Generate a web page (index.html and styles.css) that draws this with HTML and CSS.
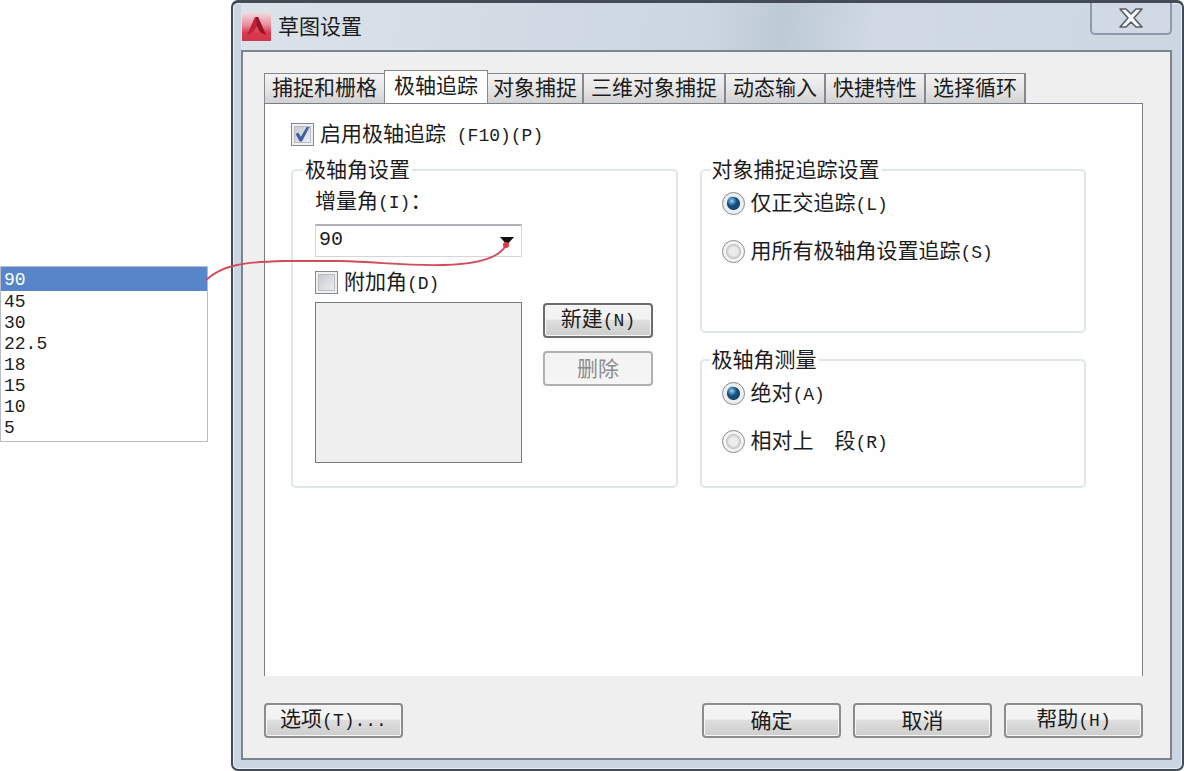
FILE: index.html
```html
<!DOCTYPE html>
<html lang="zh-CN">
<head>
<meta charset="utf-8">
<meta name="viewport" content="width=device-width, initial-scale=1">
<title>草图设置</title>
<link rel="stylesheet" href="styles.css">
</head>
<body class="page">
<aside class="angles">
  <select class="angle-list" size="8" aria-label="增量角列表">
    <option selected>90</option>
    <option>45</option>
    <option>30</option>
    <option>22.5</option>
    <option>18</option>
    <option>15</option>
    <option>10</option>
    <option>5</option>
  </select>
</aside>
<main class="dialog">
  <header class="titlebar">
    <svg class="logo" viewBox="0 0 29 28" aria-hidden="true">
      <defs><linearGradient id="logo-bg" x1="0" y1="0" x2="0" y2="1"><stop offset="0" stop-color="#f3d9de"/><stop offset=".45" stop-color="#e58a97"/><stop offset=".7" stop-color="#d93a50"/><stop offset="1" stop-color="#d0364a"/></linearGradient></defs>
      <rect width="29" height="28" fill="url(#logo-bg)"/>
      <path d="M5 22 13 4h3l8 18-6-3h-7z" fill="#c01f35"/>
      <path d="M11 19l4-6 3 6z" fill="#d8485b"/>
      <path d="M14 4h2l8 18-6-3-3-6z" fill="#971325"/>
    </svg>
    <h1 class="title">草图设置</h1>
    <button class="close" type="button" aria-label="关闭">
      <svg class="close-icon" viewBox="0 0 26 22" aria-hidden="true"><path d="M2 2h6l5 5 5-5h6l-8 9 8 9h-6l-5-5-5 5H2l8-9z" fill="#fafafa" stroke="#565c66" stroke-width="1.6" stroke-linejoin="round"/></svg>
    </button>
  </header>
  <form class="body">
    <div class="tabs" role="tablist">
      <button class="tab" type="button" role="tab">捕捉和栅格</button>
      <button class="tab tab-active" type="button" role="tab" aria-selected="true">极轴追踪</button>
      <button class="tab" type="button" role="tab">对象捕捉</button>
      <button class="tab" type="button" role="tab">三维对象捕捉</button>
      <button class="tab" type="button" role="tab">动态输入</button>
      <button class="tab" type="button" role="tab">快捷特性</button>
      <button class="tab" type="button" role="tab">选择循环</button>
    </div>
    <section class="panel" role="tabpanel">
      <label class="choice"><input class="check" type="checkbox" checked><span>启用极轴追踪<span class="latin"> (F10)(P)</span></span></label>
      <div class="groups">
        <fieldset class="group">
          <legend class="legend">极轴角设置</legend>
          <label class="field-label" for="increment">增量角<span class="latin">(I)</span>：</label>
          <div class="combo">
            <select class="combo-select" id="increment"><option>90</option><option>45</option><option>30</option></select>
            <svg class="combo-arrow" viewBox="0 0 14 8" aria-hidden="true"><path d="M0 0h14L7 8z" fill="#111"/></svg>
          </div>
          <label class="choice choice-extra"><input class="check" type="checkbox"><span>附加角<span class="latin">(D)</span></span></label>
          <div class="extra">
            <select class="extra-list" size="6" aria-label="附加角列表" disabled></select>
            <div class="extra-actions">
              <button class="button button-strong" type="button"><span>新建<span class="latin">(N)</span></span></button>
              <button class="button" type="button" disabled>删除</button>
            </div>
          </div>
        </fieldset>
        <div class="column">
          <fieldset class="group group-tall">
            <legend class="legend">对象捕捉追踪设置</legend>
            <div class="radios">
              <label class="choice"><input class="radio" type="radio" name="track" checked><span>仅正交追踪<span class="latin">(L)</span></span></label>
              <label class="choice"><input class="radio" type="radio" name="track"><span>用所有极轴角设置追踪<span class="latin">(S)</span></span></label>
            </div>
          </fieldset>
          <fieldset class="group group-short">
            <legend class="legend">极轴角测量</legend>
            <div class="radios">
              <label class="choice"><input class="radio" type="radio" name="measure" checked><span>绝对<span class="latin">(A)</span></span></label>
              <label class="choice"><input class="radio" type="radio" name="measure"><span>相对上　段<span class="latin">(R)</span></span></label>
            </div>
          </fieldset>
        </div>
      </div>
    </section>
    <footer class="footer">
      <button class="button button-wide button-first" type="button"><span>选项<span class="latin">(T)...</span></span></button>
      <button class="button button-wide" type="submit">确定</button>
      <button class="button button-wide" type="button">取消</button>
      <button class="button button-wide" type="button"><span>帮助<span class="latin">(H)</span></span></button>
    </footer>
  </form>
</main>
<svg class="connector" width="320" height="50" viewBox="0 0 320 50" aria-hidden="true">
  <path d="M6 43C22 28 44 25 84 24H140C180 25 205 29 244 28C282 27 300 20 306 8" fill="none" stroke="#d34a58" stroke-width="1.8"/>
  <circle cx="306" cy="8" r="3" fill="#e0344c"/>
</svg>
</body>
</html>
```
FILE: styles.css
```css
* { box-sizing: border-box; }

.page {
  position: relative;
  display: flex;
  gap: 23px;
  min-height: 100vh;
  margin: 0;
  background: #fff;
  color: #1c1c1c;
  font: 21px/24px "Noto Sans CJK SC", sans-serif;
}

button, input, select { font: inherit; color: inherit; margin: 0; }

.latin { font-family: "Liberation Mono", monospace; font-size: 18px; white-space: pre; }

.angles { flex: 0 0 208px; padding-top: 266px; }

.angle-list {
  display: block;
  width: 100%;
  height: 176px;
  padding: 0;
  overflow: hidden;
  border: 1px solid #b9bcc6;
  border-radius: 0;
  outline: 0;
  background: #fff;
  font: 18px/21px "Liberation Mono", monospace;
}
.angle-list option { height: 21px; min-height: 21px; padding: 1px 3px 0; line-height: 21px; }
.angle-list option:checked {
  height: 24px;
  padding-top: 3px;
  background: linear-gradient(#5685ca, #5685ca);
  -webkit-text-fill-color: #fff;
}

.dialog {
  flex: 1;
  display: flex;
  flex-direction: column;
  padding: 0 10px 9px 8px;
  border: 2px solid #434b56;
  border-top-width: 3px;
  border-radius: 7px;
  background: #cbd6e2;
  box-shadow: inset 0 0 0 1px #e8f0f6;
}

.titlebar {
  display: flex;
  align-items: center;
  gap: 7px;
  height: 47px;
  background: linear-gradient(100deg, #dbe2ea 0%, #ccd6e1 50%, #bdcad6 58%, #d0d9e4 68%, #cdd7e2 100%);
}
.logo { width: 29px; height: 28px; margin-left: 1px; }
.title { flex: 1; margin: 0; padding-bottom: 4px; font-size: 21px; font-weight: 400; }
.close {
  align-self: flex-start;
  display: grid;
  place-items: center;
  width: 82px;
  height: 32px;
  padding: 0;
  border: 2px solid #8e9aab;
  border-top: 0;
  border-radius: 0 0 5px 5px;
  background: #d0d9e4;
}
.close-icon { width: 26px; height: 22px; }

.body {
  flex: 1;
  display: flex;
  flex-direction: column;
  padding: 18px 27px 20px 21px;
  border: 2px solid #7d848e;
  background: #efefef;
}

.tabs { display: flex; align-items: flex-end; margin-bottom: -1px; }
.tab {
  height: 31px;
  padding: 0 7px 5px;
  border: 1px solid #85888e;
  border-right-width: 2px;
  background: linear-gradient(#f3f3f3, #e6e6e6 50%, #d2d2d2);
  line-height: 24px;
  white-space: nowrap;
}
.tab:not(.tab-active) + .tab:not(.tab-active) { border-left: 0; }
.tab:first-child { border-right: 0; }
.tab-active {
  height: 34px;
  padding: 0 9px 8px;
  border-right-width: 1px;
  border-bottom: 0;
  background: #fefefe;
}
.tab-active + .tab { padding: 0 5px 5px; border-left: 0; }

.panel {
  flex: 1;
  padding: 18px 56px 32px 26px;
  border: solid #7b7f88;
  border-width: 1px 1px 0;
  background: #fefefe;
}

.choice { display: flex; align-items: center; gap: 6px; height: 24px; white-space: nowrap; }
.check, .radio { appearance: none; flex: none; width: 23px; height: 23px; }
.check {
  display: grid;
  border: 1px solid #85888c;
  background: linear-gradient(135deg, #bfc3cb, #f4f4f4);
  box-shadow: inset 0 0 0 2px #f0f0f0, inset 0 0 0 3px #b8bcc2;
}
.check:checked::before {
  content: "";
  place-self: center;
  width: 14px;
  height: 15px;
  background: #405ea5;
  clip-path: polygon(0 48%, 22% 42%, 38% 68%, 82% 0, 100% 4%, 46% 100%, 30% 100%);
}
.radio {
  border: 1px solid #85898e;
  border-radius: 50%;
  background: radial-gradient(circle, #ededed 0 4px, #d4d4d4 6px, #c3c3c3 7px, #f4f4f4 8px);
}
.radio:checked {
  background: radial-gradient(circle at 42% 38%, #a3d6ef 0, #3d83b5 3px, transparent 5px), radial-gradient(circle, #174b7c 0 5px, #1d3c5a 6px, #eceff1 7px);
}

.groups { display: grid; grid-template-columns: 1fr 1fr; gap: 22px; margin-top: 12px; }
.group {
  min-width: 0;
  margin: 0;
  padding: 5px 22px 23px;
  border: 2px solid #e0e7e9;
  border-radius: 5px;
}
.legend { height: 24px; margin-left: -12px; padding: 0 2px 3px; line-height: 21px; }
.column { display: flex; flex-direction: column; gap: 15px; }
.column .group { padding: 9px 20px; }
.group-tall { flex: 178 1 0; }
.group-short { flex: 137 1 0; }
.radios { display: grid; gap: 24px; }
.field-label { display: block; }

.combo { display: grid; align-items: center; width: 207px; margin-top: 9px; }
.combo-select, .combo-arrow { grid-area: 1 / 1; }
.combo-select {
  appearance: none;
  width: 100%;
  height: 33px;
  padding: 0 3px 2px;
  border: 1px solid #d5d5d5;
  border-top: 2px solid #aeb1b5;
  border-radius: 0;
  background: #fefefe;
  font: 20px/24px "Liberation Mono", monospace;
}
.combo-arrow { justify-self: end; width: 14px; height: 8px; margin-right: 8px; pointer-events: none; }

.choice-extra { margin-top: 13px; }
.extra { display: flex; gap: 21px; margin-top: 8px; }
.extra-list {
  width: 207px;
  height: 161px;
  border: 1px solid #777a80;
  border-radius: 0;
  background: #efefef;
  opacity: 1;
}
.extra-actions { display: grid; align-content: start; gap: 13px; flex: 0 0 110px; padding-top: 1px; }

.button {
  height: 35px;
  padding: 0 0 4px;
  border: 2px solid #8b8d8d;
  border-radius: 4px;
  background: linear-gradient(#f3f3f3 0 45%, #dedede 50%, #cdcdcd);
  box-shadow: inset 0 0 0 1px #f7f7f7;
  white-space: nowrap;
}
.button-strong { border-color: #6c6c6c; }
.button:disabled { border-color: #b0b0b0; background: #f4f4f4; color: #8c8c8c; }
.button-wide { width: 139px; }

.footer { display: flex; gap: 12px; padding-top: 27px; }
.button-first { margin-right: auto; }

.connector { position: absolute; left: 200px; top: 237px; pointer-events: none; }
```
